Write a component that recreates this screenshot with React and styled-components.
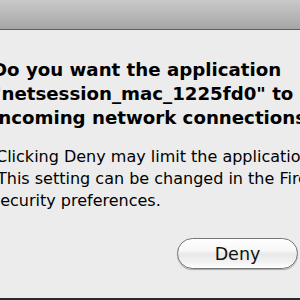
import * as React from "react"
import styled, { createGlobalStyle } from "styled-components"

const GlobalStyle = createGlobalStyle`
  html,
  body {
    margin: 0;
    width: 300px;
    height: 300px;
    overflow: hidden;
    background: #ececec;
  }
`

const Window = styled.div`
  display: flex;
  flex-direction: column;
  width: 300px;
  height: 300px;
  box-sizing: border-box;
  overflow: hidden;
  background: #ececec;
  border-bottom: 2px solid #2b2b2b;
  font-family: "DejaVu Sans", Verdana, sans-serif;
  color: #000;
`
const TitleBar = styled.div`
  flex: 0 0 29px;
  background: linear-gradient(180deg, #c9c9c9 0%, #b8b8b8 50%, #a6a6a6 100%);
  border-bottom: 1px solid #5e5e5e;
`
const Content = styled.div`
  flex: 1;
  display: flex;
  flex-direction: column;
  padding: 28px 0 0 0;
  margin-left: -8px;
`
const Heading = styled.div`
  font-size: 18.2px;
  font-weight: bold;
  line-height: 24px;
  white-space: nowrap;
`
const Message = styled.div`
  margin-top: 16px;
  font-size: 16px;
  line-height: 22px;
  white-space: nowrap;
`
const Line = styled.div`
  text-indent: ${props => props.indent || 0}px;
`
const ButtonRow = styled.div`
  display: flex;
  justify-content: flex-end;
  margin-top: 26px;
`
const Button = styled.button`
  width: 121px;
  height: 31px;
  margin-right: 2px;
  padding: 0;
  border: 1px solid #767676;
  border-radius: 16px;
  background: linear-gradient(
    180deg,
    #ffffff 0%,
    #f7f7f7 40%,
    #e9e9e9 52%,
    #f1f1f1 78%,
    #ffffff 100%
  );
  box-shadow: 0 1px 1px rgba(0, 0, 0, 0.3);
  font-family: "DejaVu Sans", Verdana, sans-serif;
  font-size: 17.5px;
  color: #111;
`

const App = () => {
  return (
    <>
      <GlobalStyle />
      <Window>
        <TitleBar />
        <Content>
          <Heading>
            <Line indent={0}>Do you want the application</Line>
            <Line>"netsession_mac_1225fd0" to accept</Line>
            <Line>incoming network connections?</Line>
          </Heading>
          <Message>
            <Line indent={4}>Clicking Deny may limit the application's behavior.</Line>
            <Line indent={5}>This setting can be changed in the Firewall pane of</Line>
            <Line indent={-2}>Security preferences.</Line>
          </Message>
          <ButtonRow>
            <Button>Deny</Button>
          </ButtonRow>
        </Content>
      </Window>
    </>
  )
}

export default App
